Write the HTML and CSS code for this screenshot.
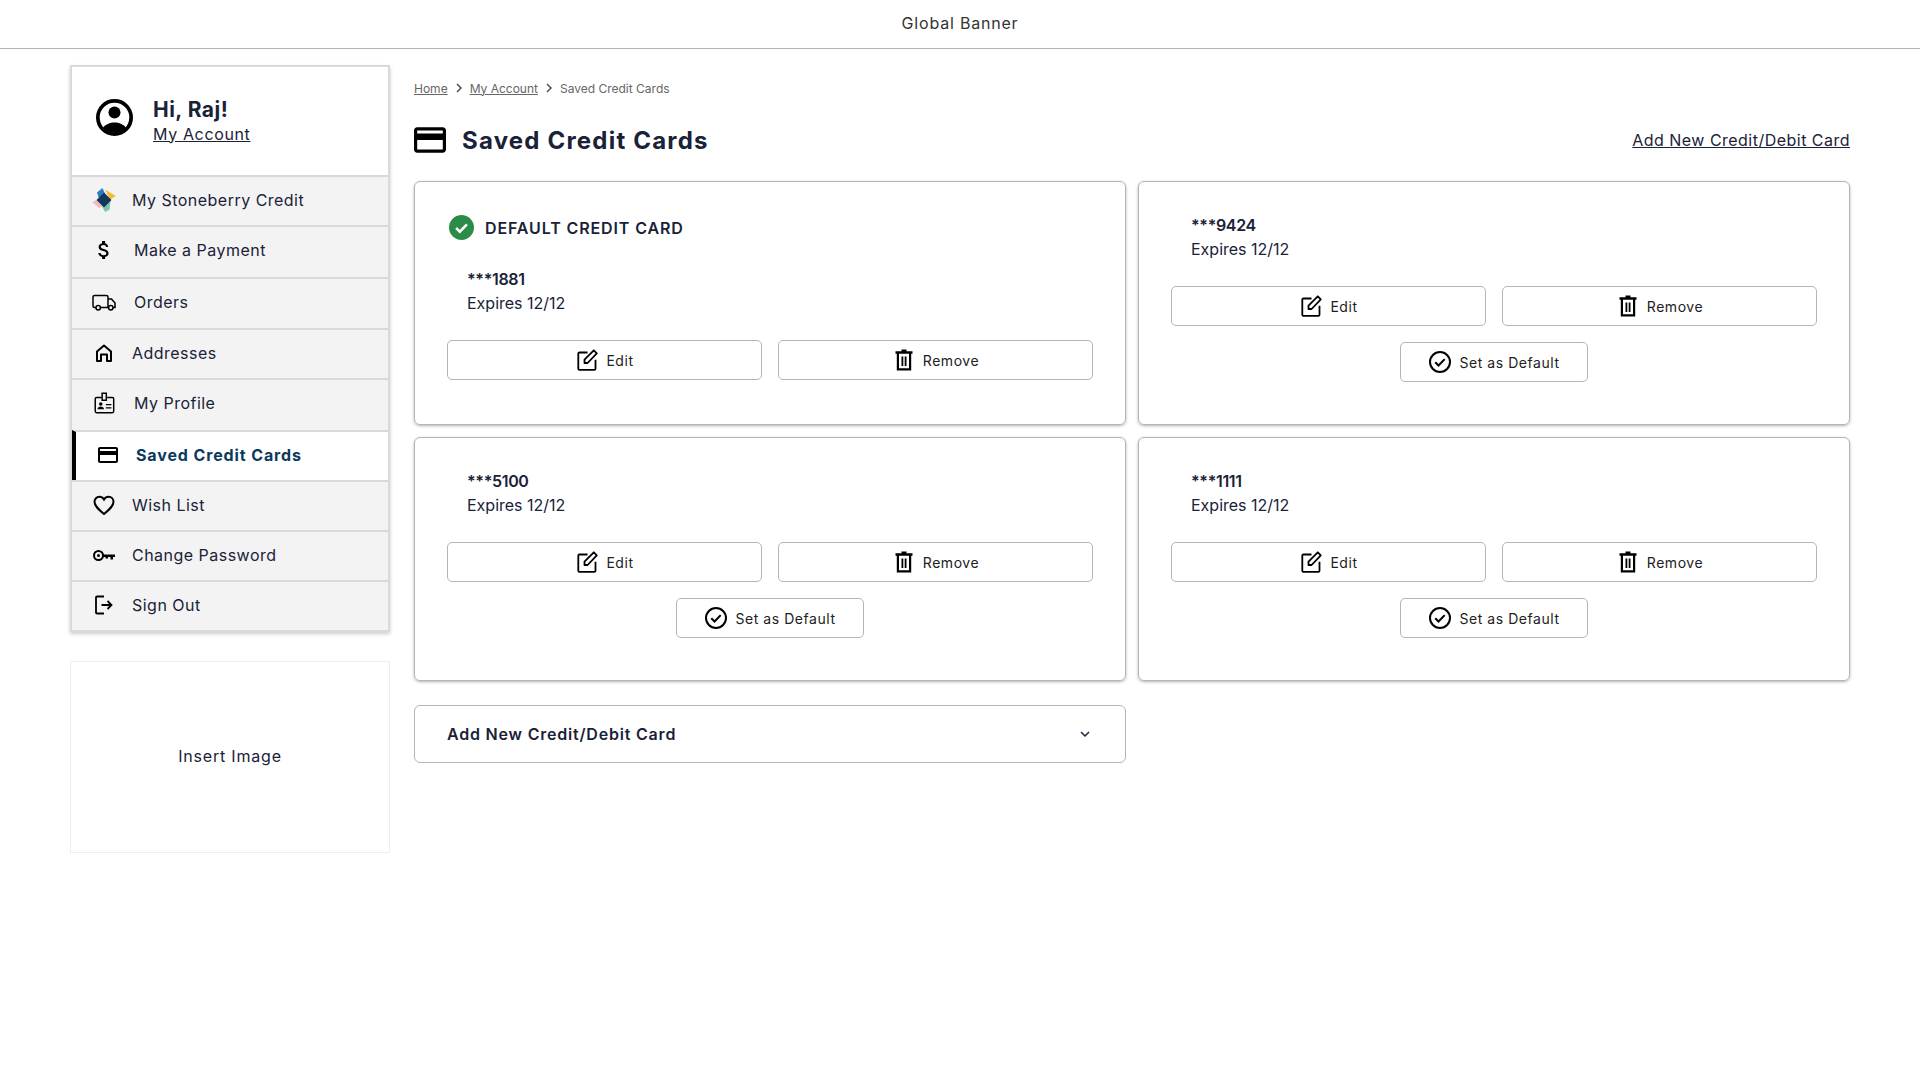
FILE: index.html
```html
<!DOCTYPE html>
<html lang="en">
<head>
    <meta charset="UTF-8">
    <meta name="viewport" content="width=device-width, initial-scale=1.0">
    <title>Saved Credit Cards</title>
    <link rel="stylesheet" href="styles.css">
</head>
<body>
    <svg class="sprite" xmlns="http://www.w3.org/2000/svg">
        <symbol id="i-card" viewBox="0 0 24 24"><path d="M20 4H4c-1.100 0-2 .9-2 2v12c0 1.100.9 2 2 2h16c1.100 0 2-.9 2-2V6c0-1.100-.9-2-2-2zm0 14H4v-6h16v6zm0-10H4V6h16v2z"/></symbol>
        <symbol id="i-edit" viewBox="0 0 24 24"><path d="M12.500 4.500H4.500a1.200 1.200 0 0 0-1.200 1.200v15a1.200 1.200 0 0 0 1.200 1.200h14.800a1.200 1.200 0 0 0 1.200-1.200v-9" fill="none" stroke="currentColor" stroke-width="1.800"/><path d="M9.500 15v-3.300L18.800 2.300l3 3-9.200 9.700z" fill="none" stroke="currentColor" stroke-width="1.800" stroke-linejoin="round"/></symbol>
        <symbol id="i-trash" viewBox="0 0 24 24"><path d="M9.500 1.500h5v1.700h6v2.600h-1.300v16.700H4.800V5.800H3.500V3.200h6zM7 5.800v14.400h10V5.800zm2.500 2.700h1.800v9.500H9.500zm3.200 0h1.800v9.500h-1.800z" fill-rule="evenodd"/></symbol>
        <symbol id="i-check" viewBox="0 0 24 24"><circle cx="12" cy="12" r="10" fill="none" stroke="currentColor" stroke-width="2"/><path d="M7.300 12.300l3.200 3.200 6.200-6.400" fill="none" stroke="currentColor" stroke-width="2"/></symbol>
    </svg>

    <header class="banner">Global Banner</header>

    <div class="page">
        <aside class="side">
            <nav class="side-menu">
                <div class="side-head">
                    <svg class="avatar" viewBox="0 0 24 24"><circle cx="12" cy="12" r="10.800" fill="none" stroke="#000" stroke-width="2.400"/><circle cx="12" cy="8.800" r="3.900"/><path d="M4.400 18.800C6 16.400 9 15.200 12 15.200s6 1.200 7.600 3.600A11 11 0 0 1 4.400 18.800z"/></svg>
                    <div class="side-user">
                        <div class="hello">Hi, Raj!</div>
                        <a class="side-link" href="#">My Account</a>
                    </div>
                </div>
                <a class="nav-item" href="#">
                    <svg class="nav-icon" viewBox="0 0 24 24"><path d="M5 4.500L10.500 0l3 7-6 5z" fill="#2a7cc0"/><path d="M13 1.500l11 6.500-6 3.500z" fill="#f4bd32"/><path d="M18.500 12.500l-1 9-4.500 2.500-3-6z" fill="#7cc6ae"/><path d="M0 14l6-2.500 5 6.500-4 2z" fill="#f3bcbc"/><path d="M12 4.500L19.500 12 12 19.500 4.500 12z" fill="#14375e"/></svg>
                    <span>My Stoneberry Credit</span>
                </a>
                <a class="nav-item nav-tall" href="#">
                    <svg class="nav-icon" viewBox="0 0 24 24"><path d="M11.800 10.900c-2.300-.6-3-1.200-3-2.100 0-1.100 1-1.900 2.700-1.900 1.800 0 2.400.8 2.500 2.100h2.200c-.1-1.700-1.100-3.200-3.100-3.700V3h-3v2.200C8.200 5.600 6.600 6.900 6.600 8.900c0 2.300 1.900 3.500 4.700 4.100 2.500.6 3 1.500 3 2.400 0 .7-.5 1.800-2.700 1.800-2.100 0-2.900-.9-3-2.100H6.400c.1 2.200 1.800 3.500 3.700 3.900V21h3v-2.100c1.900-.4 3.500-1.500 3.500-3.500 0-2.800-2.400-3.800-4.800-4.500z"/></svg>
                    <span>Make a Payment</span>
                </a>
                <a class="nav-item nav-tall" href="#">
                    <svg class="nav-icon" viewBox="0 0 24 24"><path d="M4 17.500H2.500a1.500 1.500 0 0 1-1.500-1.500V7a1.500 1.500 0 0 1 1.500-1.500h12a1.500 1.500 0 0 1 1.500 1.500v10.500H8.500M16 9h3.500l3.500 4v4.500h-2M16 17.500h.5" fill="none" stroke="#000" stroke-width="1.500"/><circle cx="6.200" cy="17.700" r="2.200" fill="none" stroke="#000" stroke-width="1.500"/><circle cx="18.800" cy="17.700" r="2.200" fill="none" stroke="#000" stroke-width="1.500"/></svg>
                    <span>Orders</span>
                </a>
                <a class="nav-item" href="#">
                    <svg class="nav-icon" viewBox="0 0 24 24"><path d="M5 20V10.500L12 4.500l7 6V20h-4v-6.500H9V20z" fill="none" stroke="#000" stroke-width="2" stroke-linejoin="round"/></svg>
                    <span>Addresses</span>
                </a>
                <a class="nav-item nav-tall" href="#">
                    <svg class="nav-icon" viewBox="-1 -1 26 26"><path d="M9.500 6H4a1.500 1.500 0 0 0-1.500 1.500V21A1.500 1.500 0 0 0 4 22.500h17a1.500 1.500 0 0 0 1.500-1.500V7.500A1.500 1.500 0 0 0 21 6h-5.500" fill="none" stroke="#000" stroke-width="1.600"/><path d="M10 1.500h4.500V9H10z" fill="none" stroke="#000" stroke-width="1.600"/><circle cx="8.500" cy="13" r="1.900"/><path d="M5 18.800c0-2 1.600-3 3.500-3s3.500 1 3.500 3zM14 13h6v1.500h-6zM14 16.500h6V18h-6z"/></svg>
                    <span>My Profile</span>
                </a>
                <a class="nav-item nav-active" href="#">
                    <svg class="nav-icon"><use href="#i-card"/></svg>
                    <span>Saved Credit Cards</span>
                </a>
                <a class="nav-item" href="#">
                    <svg class="nav-icon" viewBox="0 0 24 24"><path d="M12 21C6 16 2.500 12.800 2.500 8.800 2.500 5.900 4.700 3.800 7.400 3.800c1.900 0 3.600 1 4.600 2.700 1-1.700 2.700-2.700 4.600-2.700 2.700 0 4.900 2.100 4.900 5 0 4-3.500 7.200-9.500 12.200z" fill="none" stroke="#000" stroke-width="2"/></svg>
                    <span>Wish List</span>
                </a>
                <a class="nav-item" href="#">
                    <svg class="nav-icon" viewBox="0 0 24 24"><circle cx="6.500" cy="12.500" r="4.500" fill="none" stroke="#000" stroke-width="2"/><circle cx="6.500" cy="12.500" r="1.500"/><path d="M11 11.500h12v2.500h-2v2.500h-2.500V14H16v1.500h-2.500V14H11z"/></svg>
                    <span>Change Password</span>
                </a>
                <a class="nav-item" href="#">
                    <svg class="nav-icon" viewBox="0 0 24 24"><path d="M12 3.500H5a1 1 0 0 0-1 1v15a1 1 0 0 0 1 1h7" fill="none" stroke="#000" stroke-width="1.800"/><path d="M9.500 12H19M15.500 8l4 4-4 4" fill="none" stroke="#000" stroke-width="1.800"/></svg>
                    <span>Sign Out</span>
                </a>
            </nav>
            <div class="image-box">Insert Image</div>
        </aside>

        <main class="content">
            <div class="crumbs">
                <a href="#">Home</a>
                <svg class="crumb-arrow" viewBox="0 0 10 10"><path d="M3 1l4 4-4 4" fill="none" stroke="#444" stroke-width="1.400"/></svg>
                <a href="#">My Account</a>
                <svg class="crumb-arrow" viewBox="0 0 10 10"><path d="M3 1l4 4-4 4" fill="none" stroke="#444" stroke-width="1.400"/></svg>
                <span>Saved Credit Cards</span>
            </div>

            <div class="title-row">
                <svg class="title-icon" viewBox="2 4 20 16"><use href="#i-card" x="0" y="0" width="24" height="24"/></svg>
                <h1>Saved Credit Cards</h1>
                <a class="add-link" href="#">Add New Credit/Debit Card</a>
            </div>

            <div class="cards">
                <section class="card">
                    <div class="default-label">
                        <svg class="default-icon" viewBox="0 0 24 24"><circle cx="12" cy="12" r="12" fill="#2b8c47"/><path d="M6.800 12.500l3.600 3.500 6.800-7" fill="none" stroke="#fff" stroke-width="2.400"/></svg>
                        <span>DEFAULT CREDIT CARD</span>
                    </div>
                    <div class="card-info">
                        <div class="card-num">***1881</div>
                        <div>Expires 12/12</div>
                    </div>
                    <div class="btn-row">
                        <button class="btn"><svg><use href="#i-edit"/></svg>Edit</button>
                        <button class="btn"><svg><use href="#i-trash"/></svg>Remove</button>
                    </div>
                </section>

                <section class="card card-plain">
                    <div class="card-info">
                        <div class="card-num">***9424</div>
                        <div>Expires 12/12</div>
                    </div>
                    <div class="btn-row">
                        <button class="btn"><svg><use href="#i-edit"/></svg>Edit</button>
                        <button class="btn"><svg><use href="#i-trash"/></svg>Remove</button>
                    </div>
                    <button class="btn btn-default"><svg><use href="#i-check"/></svg>Set as Default</button>
                </section>

                <section class="card card-plain">
                    <div class="card-info">
                        <div class="card-num">***5100</div>
                        <div>Expires 12/12</div>
                    </div>
                    <div class="btn-row">
                        <button class="btn"><svg><use href="#i-edit"/></svg>Edit</button>
                        <button class="btn"><svg><use href="#i-trash"/></svg>Remove</button>
                    </div>
                    <button class="btn btn-default"><svg><use href="#i-check"/></svg>Set as Default</button>
                </section>

                <section class="card card-plain">
                    <div class="card-info">
                        <div class="card-num">***1111</div>
                        <div>Expires 12/12</div>
                    </div>
                    <div class="btn-row">
                        <button class="btn"><svg><use href="#i-edit"/></svg>Edit</button>
                        <button class="btn"><svg><use href="#i-trash"/></svg>Remove</button>
                    </div>
                    <button class="btn btn-default"><svg><use href="#i-check"/></svg>Set as Default</button>
                </section>

                <div class="accordion">
                    <span>Add New Credit/Debit Card</span>
                    <svg class="accordion-arrow" viewBox="0 0 12 12"><path d="M2 4l4 4 4-4" fill="none" stroke="#1a2238" stroke-width="1.500"/></svg>
                </div>
            </div>
        </main>
    </div>
</body>
</html>
```

FILE: styles.css
```css
* {
    box-sizing: border-box;
}
body {
    font-family: Inter, "Liberation Sans", sans-serif;
    font-size: 16px;
    letter-spacing: 0.03em;
    color: #1a2238;
    background-color: #ffffff;
    margin: 0;
    padding: 0;
}
a {
    color: inherit;
}
.sprite {
    display: none;
}
.banner {
    height: 49px;
    line-height: 47px;
    text-align: center;
    letter-spacing: 0.05em;
    color: #333333;
    border-bottom: 1px solid #b5b5b5;
}
.page {
    display: flex;
    gap: 24px;
    padding: 16px 70px 0 70px;
}
.side {
    width: 320px;
    flex-shrink: 0;
}
.side-menu {
    border: 2px solid #d9d9d9;
    box-shadow: 0 2px 4px rgba(0, 0, 0, 0.2);
}
.side-head {
    display: flex;
    align-items: center;
    gap: 20px;
    height: 108px;
    padding-left: 24px;
}
.avatar {
    width: 37px;
    height: 37px;
    margin-bottom: 8px;
}
.side-user {
    margin-bottom: 2px;
}
.hello {
    font-size: 21px;
    font-weight: 700;
    line-height: 28px;
}
.side-link {
    display: block;
    line-height: 21px;
    letter-spacing: 0.04em;
}
.nav-item {
    display: flex;
    align-items: center;
    gap: 16px;
    height: 50px;
    padding-left: 20px;
    padding-bottom: 3px;
    background-color: #f3f3f3;
    border-top: 2px solid #d9d9d9;
    text-decoration: none;
}
.nav-tall {
    height: 51.7px;
    gap: 18px;
    padding-bottom: 4px;
}
.nav-active {
    background-color: #ffffff;
    border-left: 4px solid #000000;
    color: #0b3a5d;
    font-weight: 700;
    letter-spacing: 0.055em;
}
.nav-icon {
    width: 24px;
    height: 24px;
    flex-shrink: 0;
}
.image-box {
    display: flex;
    align-items: center;
    justify-content: center;
    height: 192px;
    margin-top: 29px;
    border: 1px solid #eeeeee;
    padding-bottom: 3px;
    letter-spacing: 0.05em;
}
.content {
    flex: 1;
    min-width: 0;
}
.crumbs {
    display: flex;
    align-items: center;
    gap: 6px;
    height: 16px;
    margin-top: 15px;
    font-size: 12px;
    letter-spacing: 0;
    color: #666666;
}
.crumb-arrow {
    width: 10px;
    height: 10px;
}
.title-row {
    display: flex;
    align-items: center;
    height: 40px;
    margin-top: 24px;
}
.title-icon {
    width: 32px;
    height: 26px;
    margin-right: 16px;
}
h1 {
    margin: 0;
    font-size: 24px;
    font-weight: 700;
    letter-spacing: 0.05em;
}
.add-link {
    margin-left: auto;
}
.cards {
    display: grid;
    grid-template-columns: 1fr 1fr;
    grid-auto-rows: 244px 244px auto;
    gap: 12px;
    margin-top: 21px;
}
.card {
    padding: 33px 32px 0;
    border: 1px solid #b5b5b5;
    border-radius: 6px;
    box-shadow: 0 1px 3px rgba(0, 0, 0, 0.3);
}
.card-plain {
    padding-top: 31px;
    text-align: center;
}
.default-label {
    display: flex;
    align-items: center;
    gap: 11px;
    margin-left: 2px;
    margin-bottom: 27px;
    font-weight: 600;
    letter-spacing: 0.055em;
}
.default-icon {
    width: 25px;
    height: 25px;
}
.card-info {
    padding-left: 20px;
    line-height: 24px;
    text-align: left;
    letter-spacing: 0;
}
.card-num {
    font-weight: 600;
    letter-spacing: -0.02em;
}
.btn-row {
    display: flex;
    gap: 16px;
    margin-top: 25px;
}
.btn {
    display: inline-flex;
    align-items: center;
    justify-content: center;
    gap: 7px;
    flex: 1;
    height: 40px;
    background-color: #ffffff;
    border: 1px solid #b5b5b5;
    border-radius: 5px;
    font-family: inherit;
    font-size: 14px;
    letter-spacing: 0.04em;
    color: #222222;
}
.btn svg {
    width: 24px;
    height: 24px;
    fill: #000000;
    color: #000000;
}
.btn-default {
    width: 188px;
    margin-top: 16px;
}
.accordion {
    display: flex;
    align-items: center;
    justify-content: space-between;
    height: 58px;
    margin-top: 12px;
    padding: 0 32px;
    border: 1px solid #b5b5b5;
    border-radius: 6px;
    font-weight: 600;
    letter-spacing: 0.05em;
}
.accordion-arrow {
    width: 12px;
    height: 12px;
    margin-right: 2px;
}
```
